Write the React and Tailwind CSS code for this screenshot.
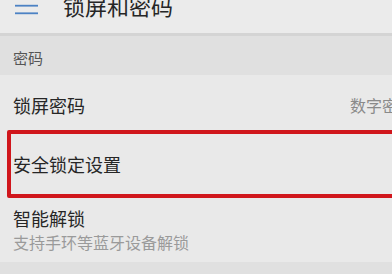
import React from "react";

export default function App() {
  const font = "font-['Noto_Sans_CJK_SC','Noto_Sans',sans-serif]";
  return (
    <div className={`relative w-[392px] h-[274px] overflow-hidden bg-[#e9e9e9] ${font}`}>
      {/* header */}
      <div className="h-[36px] bg-[#ebebeb] flex items-start border-b-[3px] border-[#d4d4d4]">
        <svg width="40" height="20" viewBox="0 0 40 20" className="shrink-0">
          <rect x="15" y="-3" width="23" height="2" fill="#4c82c4" />
          <rect x="15" y="4.8" width="23" height="1.8" fill="#4c82c4" />
          <rect x="15" y="12.4" width="23" height="1.8" fill="#4c82c4" />
        </svg>
        <div className="ml-[23px] -mt-[6px] text-[22px] leading-[22px] text-[#262626]">锁屏和密码</div>
      </div>
      {/* section header */}
      <div className="h-[39px] bg-[#e0e0e0] flex items-center pl-[13px] pt-[4px]">
        <span className="text-[15px] leading-[15px] text-[#555]">密码</span>
      </div>
      {/* row 1 */}
      <div className="h-[58px] flex items-center justify-between pl-[13px] pt-[1px]">
        <span className="text-[18px] leading-[18px] text-[#262626]">锁屏密码</span>
        <span className="text-[16px] leading-[16px] text-[#8a8a8a] whitespace-nowrap mr-[-22px]">数字密码</span>
      </div>
      {/* row 2 */}
      <div className="h-[61px] flex items-center pl-[13px] pt-[1px]">
        <span className="text-[18px] leading-[18px] text-[#262626]">安全锁定设置</span>
      </div>
      {/* row 3 */}
      <div className="h-[68px] flex flex-col justify-center pl-[13px] gap-[7px] pt-[2px]">
        <span className="text-[18px] leading-[18px] text-[#262626]">智能解锁</span>
        <span className="text-[16px] leading-[16px] text-[#9a9a9a]">支持手环等蓝牙设备解锁</span>
      </div>
      <div className="h-[12px] bg-[#e0e0e0]" />
      {/* annotation */}
      <div className="absolute left-[7px] top-[130px] w-[400px] h-[68px] border-[4px] border-[#d0161c] rounded-[2px]" />
    </div>
  );
}
